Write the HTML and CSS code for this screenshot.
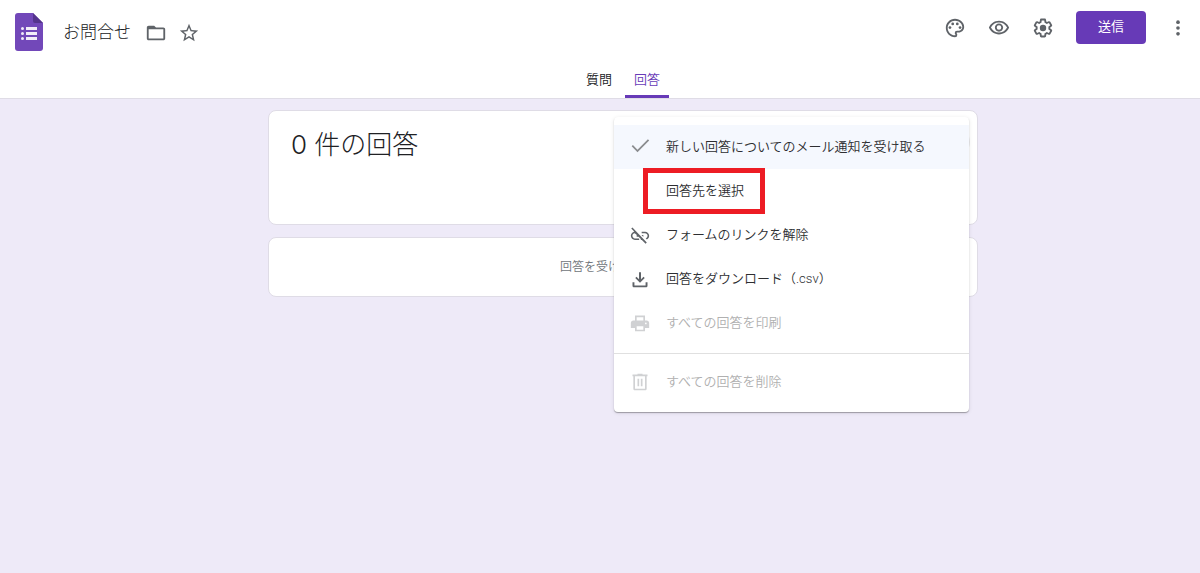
FILE: index.html
```html
<!DOCTYPE html>
<html lang="ja">
<head>
    <meta charset="UTF-8">
    <meta name="viewport" content="width=device-width, initial-scale=1.0">
    <title>お問合せ</title>
    <link rel="stylesheet" href="styles.css">
</head>
<body>

    <header class="header">
        <div class="toolbar">
            <a href="#" class="logo" aria-label="ホーム">
                <svg width="28" height="38" viewBox="0 0 28 38">
                    <path fill="#7248b9" d="M3 0h15l10 10v25a3 3 0 0 1-3 3H3a3 3 0 0 1-3-3V3a3 3 0 0 1 3-3z"/>
                    <path fill="#54348c" d="M18 0l10 10H20a2 2 0 0 1-2-2z"/>
                    <g fill="#f1ecf8">
                        <circle cx="7.500" cy="15.500" r="1.500"/>
                        <circle cx="7.500" cy="20.500" r="1.500"/>
                        <circle cx="7.500" cy="25.500" r="1.500"/>
                        <path d="M11 14h11v3H11zM11 19h11v3H11zM11 24h11v3H11z"/>
                    </g>
                </svg>
            </a>
            <h1 class="title">お問合せ</h1>
            <button type="button" class="icon-button folder" aria-label="フォルダに移動">
                <svg viewBox="0 0 24 24"><path d="M20 6h-8l-2-2H4c-1.100 0-2 .9-2 2v12c0 1.100.9 2 2 2h16c1.100 0 2-.9 2-2V8c0-1.100-.9-2-2-2zm0 12H4V8h16v10z"/></svg>
            </button>
            <button type="button" class="icon-button star" aria-label="スターを付ける">
                <svg viewBox="0 0 24 24"><path d="M22 9.240l-7.190-.62L12 2 9.190 8.630 2 9.240l5.460 4.730L5.820 21 12 17.270 18.180 21l-1.630-7.030L22 9.240zM12 15.400l-3.760 2.270 1-4.280-3.320-2.880 4.380-.38L12 6.100l1.710 4.040 4.380.38-3.320 2.880 1 4.280L12 15.400z"/></svg>
            </button>
            <div class="actions">
                <button type="button" class="icon-button" aria-label="テーマをカスタマイズ">
                    <svg viewBox="0 0 24 24"><path d="M12 22C6.490 22 2 17.510 2 12S6.490 2 12 2s10 4.040 10 9c0 3.310-2.690 6-6 6h-1.770c-.28 0-.5.22-.5.5 0 .12.050.23.130.33.410.470.640 1.060.640 1.670A2.500 2.500 0 0 1 12 22zm0-18c-4.410 0-8 3.590-8 8s3.590 8 8 8c.28 0 .5-.22.5-.5a.54.54 0 0 0-.14-.35c-.41-.46-.63-1.050-.63-1.650a2.500 2.500 0 0 1 2.500-2.500H16c2.210 0 4-1.790 4-4 0-3.860-3.590-7-8-7z"/><circle cx="6.500" cy="11.500" r="1.500"/><circle cx="9.500" cy="7.500" r="1.500"/><circle cx="14.500" cy="7.500" r="1.500"/><circle cx="17.500" cy="11.500" r="1.500"/></svg>
                </button>
                <button type="button" class="icon-button" aria-label="プレビュー">
                    <svg viewBox="0 0 24 24"><path d="M12 6c3.790 0 7.170 2.130 8.820 5.500C19.170 14.870 15.790 17 12 17s-7.170-2.130-8.820-5.500C4.830 8.130 8.210 6 12 6m0-2C7 4 2.730 7.110 1 11.500 2.730 15.890 7 19 12 19s9.270-3.110 11-7.500C21.270 7.110 17 4 12 4zm0 5a2.500 2.500 0 0 1 0 5 2.500 2.500 0 0 1 0-5m0-2c-2.480 0-4.500 2.020-4.500 4.500S9.520 16 12 16s4.500-2.020 4.500-4.500S14.480 7 12 7z"/></svg>
                </button>
                <button type="button" class="icon-button" aria-label="設定">
                    <svg viewBox="0 0 24 24"><path d="M13.850 22.250h-3.700c-.74 0-1.360-.54-1.450-1.270l-.27-1.890c-.27-.14-.53-.29-.79-.46l-1.800.72c-.7.260-1.470-.03-1.810-.65L2.200 15.530c-.35-.66-.2-1.440.36-1.880l1.530-1.190c-.01-.15-.02-.3-.02-.46 0-.15.010-.31.020-.46l-1.520-1.190c-.59-.45-.74-1.260-.37-1.880l1.850-3.190c.34-.62 1.110-.9 1.790-.63l1.810.73c.26-.17.52-.32.78-.46l.27-1.910c.09-.7.710-1.250 1.440-1.250h3.700c.74 0 1.360.540 1.450 1.270l.27 1.890c.27.140.53.290.79.460l1.800-.72c.71-.26 1.480.03 1.820.65l1.840 3.180c.36.660.2 1.440-.36 1.880l-1.520 1.190c.01.150.02.3.02.46s-.01.310-.02.46l1.520 1.190c.56.450.72 1.230.37 1.860l-1.860 3.220c-.34.620-1.110.9-1.800.63l-1.800-.72c-.26.170-.52.320-.78.460l-.27 1.910c-.1.680-.72 1.220-1.460 1.220zm-3.230-2h2.760l.37-2.550.53-.22c.44-.18.88-.44 1.340-.78l.45-.34 2.380.96 1.380-2.400-2.030-1.580.07-.56c.03-.26.060-.51.060-.78s-.03-.53-.06-.78l-.07-.56 2.030-1.580-1.390-2.400-2.390.96-.45-.35c-.42-.32-.87-.58-1.330-.77l-.52-.22-.37-2.550h-2.760l-.37 2.550-.53.210c-.44.190-.88.440-1.340.79l-.45.330-2.380-.95-1.390 2.390 2.030 1.580-.07.560a7 7 0 0 0-.06.790c0 .26.020.53.060.78l.07.560-2.030 1.580 1.380 2.400 2.390-.96.45.350c.43.330.86.580 1.330.77l.53.220.38 2.550z"/><circle cx="12" cy="12" r="3.500"/></svg>
                </button>
                <button type="button" class="send">送信</button>
                <button type="button" class="icon-button more" aria-label="その他">
                    <svg viewBox="0 0 24 24"><circle cx="12" cy="5" r="2.200"/><circle cx="12" cy="12" r="2.200"/><circle cx="12" cy="19" r="2.200"/></svg>
                </button>
            </div>
        </div>
        <nav class="tabs">
            <a href="#" class="tab">質問</a>
            <a href="#" class="tab active">回答</a>
        </nav>
    </header>

    <main class="page">
        <div class="content">
            <section class="card summary">
                <h2 class="count">0 件の回答</h2>
                <button type="button" class="options" aria-label="回答のオプション"></button>
            </section>
            <section class="card status">
                <span>回答を受け</span>
            </section>

            <div class="menu">
                <button type="button" class="menu-item selected">
                    <svg viewBox="0 0 24 24"><path d="M9 15.170L3.500 9.700 2 11.200 9 18.200 23 4.200 21.500 2.700z"/></svg>
                    <span class="label">新しい回答についてのメール通知を受け取る</span>
                </button>
                <button type="button" class="menu-item marked">
                    <span class="no-icon"></span>
                    <span class="label">回答先を選択</span>
                </button>
                <button type="button" class="menu-item">
                    <svg viewBox="0 0 24 24"><path d="M18 8h-4v1.900h4c1.710 0 3.100 1.390 3.100 3.100 0 1.430-.98 2.630-2.310 2.980l1.460 1.460C21.880 16.610 23 14.950 23 13c0-2.760-2.240-5-5-5zm-2 4h-2.190l2 2H16v-2zM1.500 4.270l3.610 3.610C2.790 8.620 1 10.910 1 13c0 2.760 2.240 5 5 5h5v-1.900H6c-1.710 0-3.100-1.390-3.100-3.100 0-1.590 1.210-2.900 2.760-3.070L8.230 12H8v2h2.230L13 16.770V18h1.230l4.510 4.510 1.410-1.410L2.910 2.860 1.500 4.270z"/></svg>
                    <span class="label">フォームのリンクを解除</span>
                </button>
                <button type="button" class="menu-item">
                    <svg viewBox="0 0 24 24"><path d="M13.200 4v8.200l3-3L17.700 10.700 12 16.400l-5.700-5.700 1.500-1.500 3 3V4zM3 16h2.300v3.700h13.400V16H21v4c0 1.100-.9 2-2 2H5c-1.100 0-2-.9-2-2z"/></svg>
                    <span class="label">回答をダウンロード（.csv）</span>
                </button>
                <button type="button" class="menu-item" disabled>
                    <svg viewBox="0 0 24 24"><path fill-rule="evenodd" d="M20 9h-2V3H6v6H4c-1.660 0-3 1.340-3 3v6h5v4h12v-4h5v-6c0-1.660-1.340-3-3-3zM8 5h8v4H8V5zm8 15H8v-4h8v4zm3-6.500a1 1 0 1 1 0-2 1 1 0 0 1 0 2z"/></svg>
                    <span class="label">すべての回答を印刷</span>
                </button>
                <hr class="divider">
                <button type="button" class="menu-item" disabled>
                    <svg viewBox="0 0 24 24"><path fill-rule="evenodd" d="M15 3V2H9v1H3v2h1v15c0 1.100.9 2 2 2h12c1.100 0 2-.9 2-2V5h1V3h-6zm3 17H6V5h12v15zM9 8h2v9H9zM13 8h2v9h-2z"/></svg>
                    <span class="label">すべての回答を削除</span>
                </button>
            </div>
        </div>
    </main>

</body>
</html>
```

FILE: styles.css
```css
* {
    box-sizing: border-box;
}

body {
    margin: 0;
    min-height: 100vh;
    background-color: #eeeaf8;
    color: #202124;
    font-family: Roboto, "Noto Sans CJK JP", sans-serif;
    font-size: 13px;
    font-weight: 350;
}

button {
    border: 0;
    padding: 0;
    background: none;
    color: inherit;
    font: inherit;
    cursor: pointer;
}

svg {
    display: block;
    flex: none;
}

.header {
    display: flex;
    flex-direction: column;
    background-color: #fff;
    border-bottom: 1px solid #dfdce6;
}

.toolbar {
    display: flex;
    align-items: center;
    height: 64px;
    padding: 0 12px 0 15px;
}

.title {
    margin: 0 14px 0 20px;
    font-size: 17px;
    font-weight: 300;
    line-height: 24px;
}

.icon-button svg {
    width: 22px;
    height: 22px;
    fill: #5f6368;
}

.folder,
.star {
    padding-top: 2px;
}

.star {
    margin-left: 11px;
}

.actions {
    display: flex;
    align-items: center;
    gap: 22px;
    height: 55px;
    margin-left: auto;
    align-self: flex-start;
}

.send {
    width: 70px;
    height: 33px;
    padding-bottom: 4px;
    border-radius: 4px;
    background-color: #673ab7;
    color: #fff;
    font-weight: 400;
}

.more svg {
    width: 20px;
    height: 20px;
}

/* Tabs */
.tabs {
    display: flex;
    justify-content: center;
    gap: 4px;
    padding-left: 46px;
}

.tab {
    width: 44px;
    height: 34px;
    border-bottom: 3px solid transparent;
    border-radius: 2px 2px 0 0;
    color: #202124;
    line-height: 32px;
    text-align: center;
    text-decoration: none;
}

.tab.active {
    border-bottom-color: #673ab7;
    color: #673ab7;
}

/* Cards */
.page {
    padding: 11px 0 12px 46px;
}

.content {
    position: relative;
    display: flex;
    flex-direction: column;
    gap: 12px;
    max-width: 710px;
    margin: 0 auto;
}

.card {
    display: flex;
    background-color: #fff;
    border: 1px solid #dfdce6;
    border-radius: 8px;
}

.summary {
    justify-content: space-between;
    min-height: 115px;
    padding: 15px 7px 14px 22px;
}

.count {
    margin: 0;
    font-family: Inter, "Noto Sans CJK JP", sans-serif;
    font-size: 26px;
    font-weight: 300;
    line-height: 38px;
}

.options {
    width: 32px;
    height: 32px;
    border-radius: 50%;
    background-color: #ececee;
}

.status {
    align-items: center;
    min-height: 60px;
    padding: 0 0 4px 41%;
    color: #70757a;
    font-size: 12px;
}

/* Menu */
.menu {
    position: absolute;
    top: 7px;
    right: 9px;
    width: 50%;
    padding: 8px 0;
    background-color: #fff;
    border-radius: 4px;
    box-shadow: 0 1px 1px rgba(0, 0, 0, 0.3), 0 1px 4px rgba(0, 0, 0, 0.1);
}

.menu-item {
    position: relative;
    display: flex;
    align-items: center;
    gap: 16px;
    width: 100%;
    height: 44px;
    padding: 0 16px;
    color: #2d2e31;
    text-align: left;
}

.menu-item svg,
.no-icon {
    width: 20px;
    height: 20px;
    fill: #5f6368;
}

.label {
    padding-bottom: 4px;
}

.menu-item.selected {
    background-color: #f5f8fe;
}

.menu-item.selected svg {
    fill: #8a8c8f;
}

.menu-item:disabled {
    color: #b0b0b0;
    cursor: default;
}

.menu-item:disabled svg {
    fill: #d0d1d3;
}

/* Red frame around the option to click */
.menu-item.marked::after {
    content: "";
    box-sizing: border-box;
    position: absolute;
    top: -1px;
    left: 29px;
    width: 122px;
    height: 46px;
    border: 5px solid #ed1c24;
}

.divider {
    margin: 8px 0 6px;
    border: 0;
    border-top: 1px solid #e0e0e0;
}
```
